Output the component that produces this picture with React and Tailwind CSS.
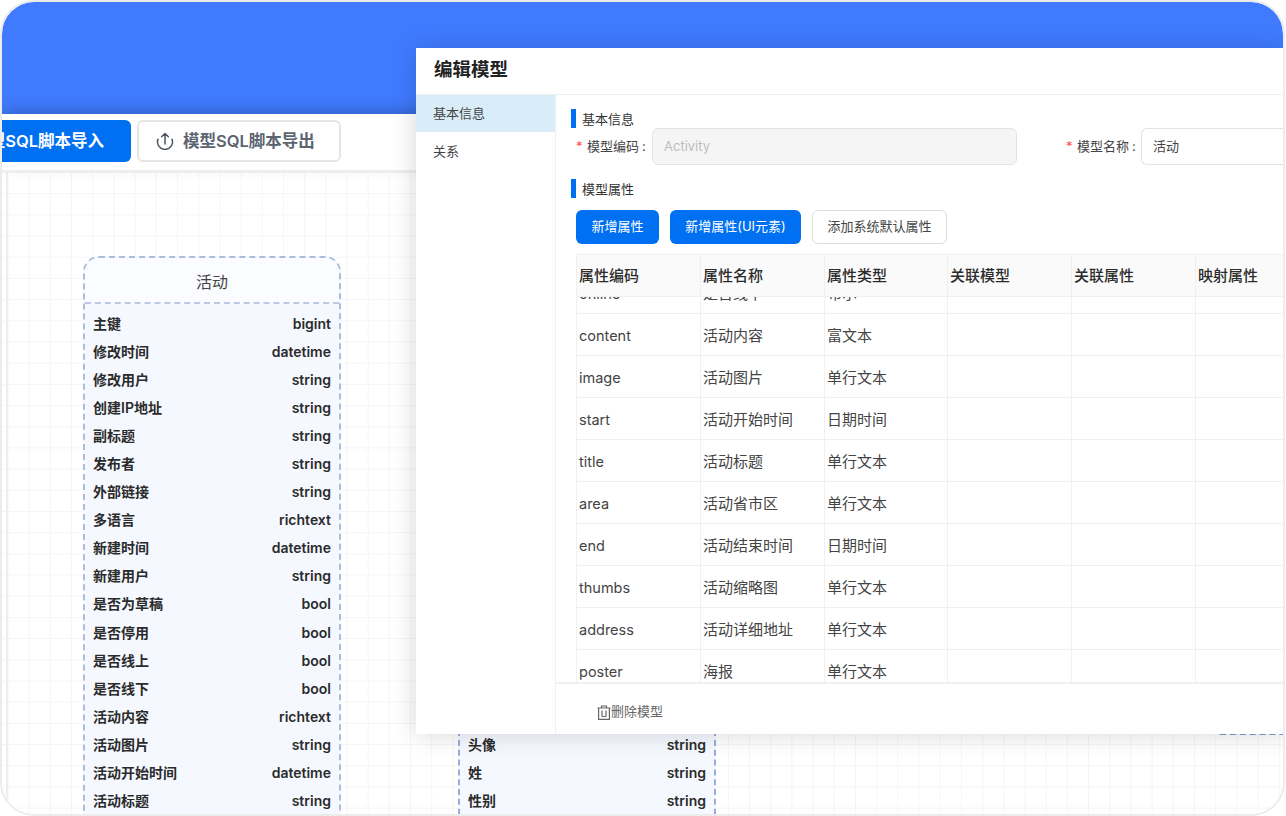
const font = { fontFamily: 'Inter, "Noto Sans CJK SC", sans-serif' };

const activityFields = [
  ['主键', 'bigint'], ['修改时间', 'datetime'], ['修改用户', 'string'], ['创建IP地址', 'string'],
  ['副标题', 'string'], ['发布者', 'string'], ['外部链接', 'string'], ['多语言', 'richtext'],
  ['新建时间', 'datetime'], ['新建用户', 'string'], ['是否为草稿', 'bool'], ['是否停用', 'bool'],
  ['是否线上', 'bool'], ['是否线下', 'bool'], ['活动内容', 'richtext'], ['活动图片', 'string'],
  ['活动开始时间', 'datetime'], ['活动标题', 'string'],
];

const userFields = [['头像', 'string'], ['姓', 'string'], ['性别', 'string']];

const columns = ['属性编码', '属性名称', '属性类型', '关联模型', '关联属性', '映射属性'];

const rows = [
  ['online', '是否线下', '布尔'],
  ['content', '活动内容', '富文本'],
  ['image', '活动图片', '单行文本'],
  ['start', '活动开始时间', '日期时间'],
  ['title', '活动标题', '单行文本'],
  ['area', '活动省市区', '单行文本'],
  ['end', '活动结束时间', '日期时间'],
  ['thumbs', '活动缩略图', '单行文本'],
  ['address', '活动详细地址', '单行文本'],
  ['poster', '海报', '单行文本'],
];

function FieldRow({ name, type }) {
  return (
    <div className="flex h-[28.06px] items-center justify-between px-2 text-[14px] font-semibold text-[#2b2b2b]">
      <span>{name}</span>
      <span>{type}</span>
    </div>
  );
}

function SectionTitle({ children }) {
  return (
    <div className="flex h-[19px] items-center gap-[6px] text-[13px] leading-none text-[#333]">
      <span className="h-[19px] w-[5px] bg-[#0070f3]" />
      <span className="pt-[2px]">{children}</span>
    </div>
  );
}

function Label({ children, className }) {
  return (
    <span className={`flex shrink-0 items-center whitespace-nowrap text-[13px] text-[#444] ${className}`}>
      <span className="mr-[5px] w-[6px] text-[#ff4d4f]">*</span>
      {children}
      <span className="ml-[3px]">:</span>
    </span>
  );
}

function UploadIcon() {
  return (
    <svg width="18" height="18" viewBox="0 0 18 18" fill="none" stroke="#4b5563" strokeWidth="1.5" strokeLinecap="round" strokeLinejoin="round" className="shrink-0">
      <path d="M2 7.2A7.5 7.5 0 1 0 16 7.2" />
      <path d="M9 12V1.5M5.6 4.8 9 1.5l3.4 3.3" />
    </svg>
  );
}

function TrashIcon() {
  return (
    <svg width="14" height="15" viewBox="0 0 14 15" fill="none" stroke="#666" strokeWidth="1.2" className="shrink-0">
      <path d="M.5 3h13M4.5 3V1h5v2M1.6 3v11.4h10.8V3M5 5.5v6M9 5.5v6M5 11.5h4" />
    </svg>
  );
}

export default function App() {
  return (
    <div style={font} className="h-[816px] w-[1286px] overflow-hidden bg-white p-[2px] pr-[3px]">
      <div className="relative flex h-[812px] w-[1281px] flex-col overflow-hidden rounded-[32px] bg-white outline-2 outline-[#ececec]">
        {/* blue top bar */}
        <div className="h-[112px] shrink-0 bg-[#407bff]" />

        {/* toolbar */}
        <div className="relative z-10 flex h-[58px] shrink-0 items-center gap-[6px] border-b-2 border-[#eeeeee] bg-white pb-[2px] shadow-[0_-6px_14px_-2px_rgba(0,0,0,0.22)]">
          <button className="-ml-[60px] flex h-[42px] w-[189px] items-center justify-end rounded-[6px] bg-[#0070f3] pr-[27px] text-[16.5px] font-semibold whitespace-nowrap text-white">
            模型SQL脚本导入
          </button>
          <button className="flex h-[42px] w-[204px] items-center gap-[9px] rounded-[6px] border-2 border-[#e5e5e5] bg-white pl-[17px] text-[16.5px] font-semibold whitespace-nowrap text-[#5b6470]">
            <UploadIcon />
            模型SQL脚本导出
          </button>
        </div>

        {/* canvas */}
        <div className="relative flex-1 bg-white bg-[linear-gradient(#f5f5f5_1px,transparent_1px),linear-gradient(90deg,#f5f5f5_1px,transparent_1px)] bg-[size:21.2px_21.2px] bg-[position:5.5px_0px]">
          <div className="absolute top-0 bottom-0 left-0 w-[6px] border-r-2 border-[#eeeeee]" />

          {/* 活动 */}
          <div className="absolute top-[84px] left-[81px] w-[258px] rounded-t-[16px] border-2 border-dashed border-[#adbbde] bg-[#f5f9ff]">
            <div className="flex h-[46px] items-center justify-center rounded-t-[14px] border-b-2 border-dashed border-[#bcc8e4] bg-[#fbfcff] pt-[3px] text-[16px] text-[#444]">
              活动
            </div>
            <div className="pt-[5.5px] pb-[40px]">
              {activityFields.map(([name, type]) => (
                <FieldRow key={name} name={name} type={type} />
              ))}
            </div>
          </div>

          {/* card behind the dialog */}
          <div className="absolute top-[450px] left-[456px] w-[258px] border-x-2 border-dashed border-[#9aacd8] bg-[#f5f9ff] pt-[108px] pb-[40px]">
            {userFields.map(([name, type]) => (
              <FieldRow key={name} name={name} type={type} />
            ))}
          </div>

          {/* card at the right edge */}
          <div className="absolute top-[561px] left-[1214px] h-[100px] w-[100px] rounded-tl-[4px] border-t-2 border-dashed border-[#7f97cf]" />
        </div>

        {/* edit dialog */}
        <div className="absolute top-[46px] left-[414px] z-20 flex h-[686px] w-[870px] flex-col bg-white shadow-[0_0_24px_rgba(0,0,0,0.16)]">
          <div className="flex h-[47px] shrink-0 items-center border-b border-[#f0f0f0] pb-[3px] pl-[18px] text-[18.5px] font-semibold text-[#222]">
            编辑模型
          </div>

          <div className="flex min-h-0 flex-1">
            <div className="w-[140px] shrink-0 border-r border-[#f0f0f0] text-[13px] text-[#444]">
              <div className="flex h-[37px] items-center bg-[#d9edf8] pl-[17px]">基本信息</div>
              <div className="flex h-[39px] items-center pt-[1px] pl-[17px]">关系</div>
            </div>

            <div className="flex min-w-0 flex-1 flex-col">
              <div className="min-h-0 flex-1 overflow-hidden">
                <div className="pt-[14px] pl-[15px]">
                  <SectionTitle>基本信息</SectionTitle>
                </div>
                <div className="flex h-[37px] items-center pl-[20px]">
                  <Label className="w-[76px]">模型编码</Label>
                  <div className="flex h-[37px] w-[365px] shrink-0 items-center rounded-[6px] border border-[#e3e3e3] bg-[#f5f5f5] pl-[11px] text-[13px] text-[#bdbdbd]">
                    Activity
                  </div>
                  <Label className="ml-[49px] w-[75px]">模型名称</Label>
                  <div className="flex h-[37px] flex-1 items-center rounded-l-[6px] border border-r-0 border-[#e3e3e3] pl-[11px] text-[13px] text-[#444]">
                    活动
                  </div>
                </div>

                <div className="pt-[14px] pl-[15px]">
                  <SectionTitle>模型属性</SectionTitle>
                </div>

                <div className="flex gap-[11px] pt-[12px] pl-[20px] text-[13px]">
                  <button className="h-[34px] w-[83px] rounded-[6px] bg-[#0070f3] text-white">新增属性</button>
                  <button className="h-[34px] w-[131px] rounded-[6px] bg-[#0070f3] text-white">新增属性(UI元素)</button>
                  <button className="h-[34px] w-[135px] rounded-[6px] border border-[#dcdcdc] text-[#444]">添加系统默认属性</button>
                </div>

                <div className="mt-[10px] ml-[20px] h-[428px] overflow-hidden">
                  <div className="relative z-10 grid h-[43px] grid-cols-[124px_124px_123px_124px_124px_124px] border-y border-l border-[#f0f0f0] bg-[#fafafa] text-[15px] font-medium text-[#2b2b2b]">
                    {columns.map((c) => (
                      <div key={c} className="flex items-center border-r border-[#f0f0f0] pt-[2px] pl-[2px]">{c}</div>
                    ))}
                  </div>
                  <div className="-mt-[25px]">
                    {rows.map((row) => (
                      <div key={row[0]} className="grid h-[42px] grid-cols-[124px_124px_123px_124px_124px_124px] border-b border-l border-[#f0f0f0] text-[15px] text-[#444]">
                        {[0, 1, 2, 3, 4, 5].map((i) => (
                          <div key={i} className="flex items-center border-r border-[#f0f0f0] pt-[3px] pl-[2px] first:text-[14.5px]">{row[i]}</div>
                        ))}
                      </div>
                    ))}
                  </div>
                </div>
              </div>

              <div className="flex h-[52px] shrink-0 items-center border-t-2 border-[#f0f0f0] pt-[6px] pl-[41px] text-[13px] text-[#666]">
                <TrashIcon />
                删除模型
              </div>
            </div>
          </div>
        </div>
      </div>
    </div>
  );
}
